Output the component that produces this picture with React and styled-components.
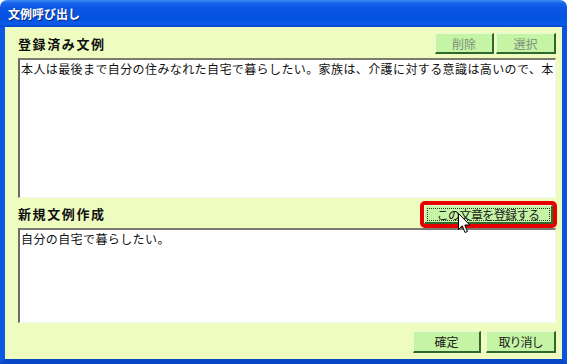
import React from "react";
import styled, { createGlobalStyle } from "styled-components";

const GlobalStyle = createGlobalStyle`
  html, body { margin: 0; padding: 0; background: #ffffff; }
  body { font-family: "Noto Sans CJK JP", "Noto Sans", sans-serif; }
  * { box-sizing: border-box; }
`;

const Window = styled.div`
  position: relative;
  width: 567px;
  height: 364px;
  display: flex;
  flex-direction: column;
`;

const TitleBar = styled.div`
  flex: none;
  height: 27px;
  border-radius: 7px 7px 0 0;
  background: linear-gradient(
    to bottom,
    #3c8cf8 0%,
    #1a64ec 12%,
    #0a55e4 30%,
    #0652e0 70%,
    #0a5ae8 90%,
    #0444cc 100%
  );
  display: flex;
  align-items: center;
  padding-left: 8px;
  color: #ffffff;
  font-size: 12px;
  font-weight: bold;
  text-shadow: 1px 1px 0 #0a2a80;
`;

const Body = styled.div`
  flex: 1;
  display: flex;
  flex-direction: column;
  background: #eefcc0;
  border-left: 5px solid #0b58e4;
  border-right: 5px solid #0b52dc;
  border-bottom: 5px solid #0847c8;
  padding: 6px 6px 0 13px;
`;

const Header = styled.div`
  flex: none;
  height: ${(p) => p.$h}px;
  margin-bottom: ${(p) => p.$mb || 0}px;
  display: flex;
  align-items: center;
  justify-content: space-between;
`;

const Label = styled.div`
  font-size: 13px;
  font-weight: bold;
  letter-spacing: 1.6px;
  color: #111;
`;

const ButtonGroup = styled.div`
  display: flex;
  gap: ${(p) => p.$gap}px;
`;

const Button = styled.button`
  width: ${(p) => p.$w}px;
  height: ${(p) => p.$h || 22}px;
  padding: 0;
  background: #c4f4a4;
  border-top: 1px solid #e6fcd6;
  border-left: 1px solid #e6fcd6;
  border-right: 2px solid #2e682e;
  border-bottom: 2px solid #2e682e;
  font-family: "Noto Sans CJK JP", sans-serif;
  font-size: 12px;
  letter-spacing: ${(p) => p.$ls || 0}px;
  color: ${(p) => (p.$dim ? "#7d8f7d" : "#1a1a1a")};
  display: flex;
  align-items: center;
  justify-content: center;
`;

const Highlight = styled.div`
  width: 137px;
  height: 27px;
  margin-top: 3px;
  margin-right: -1px;
  border: 4px solid #e60000;
  border-radius: 5px;
  background: #e60000;
  display: flex;
`;

const FocusButton = styled(Button)`
  flex: 1;
  height: 100%;
  outline: 1px dotted #2a3a2a;
  outline-offset: -4px;
`;

const TextBox = styled.div`
  flex: none;
  height: ${(p) => p.$h}px;
  background: #ffffff;
  border-top: 2px solid #7b7b72;
  border-left: 2px solid #6c6c64;
  border-right: 1px solid #f6f6f0;
  border-bottom: 1px solid #f6f6f0;
  padding: 1px 0 0 1px;
  font-size: 12px;
  line-height: 15px;
  letter-spacing: 0.4px;
  color: #111;
  white-space: nowrap;
  overflow: hidden;
`;

const Footer = styled.div`
  flex: none;
  padding-top: 8px;
  display: flex;
  justify-content: flex-end;
`;

const Cursor = styled.svg`
  position: absolute;
  left: 458px;
  top: 213px;
  width: 13px;
  height: 21px;
`;

export default function App() {
  return (
    <>
      <GlobalStyle />
      <Window>
        <TitleBar>文例呼び出し</TitleBar>
        <Body>
          <Header $h={21} $mb={4}>
            <Label>登録済み文例</Label>
            <ButtonGroup $gap={2}>
              <Button $w={59} $h={21} $dim>削除</Button>
              <Button $w={60} $h={21} $dim>選択</Button>
            </ButtonGroup>
          </Header>
          <TextBox $h={140}>
            本人は最後まで自分の住みなれた自宅で暮らしたい。家族は、介護に対する意識は高いので、本
          </TextBox>
          <Header $h={30}>
            <Label>新規文例作成</Label>
            <Highlight>
              <FocusButton $w={129} $ls={-0.6}>この文章を登録する</FocusButton>
            </Highlight>
          </Header>
          <TextBox $h={95}>自分の自宅で暮らしたい。</TextBox>
          <Footer>
            <ButtonGroup $gap={5}>
              <Button $w={68}>確定</Button>
              <Button $w={70} $ls={-1}>取り消し</Button>
            </ButtonGroup>
          </Footer>
        </Body>
        <Cursor viewBox="0 0 13 21">
          <path
            d="M0.5 0.5 L0.5 16.5 L4.3 12.8 L7 19.5 L9.4 18.5 L6.8 12 L11.8 12 Z"
            fill="#ffffff"
            stroke="#000000"
            strokeWidth="1"
            strokeLinejoin="miter"
          />
        </Cursor>
      </Window>
    </>
  );
}
